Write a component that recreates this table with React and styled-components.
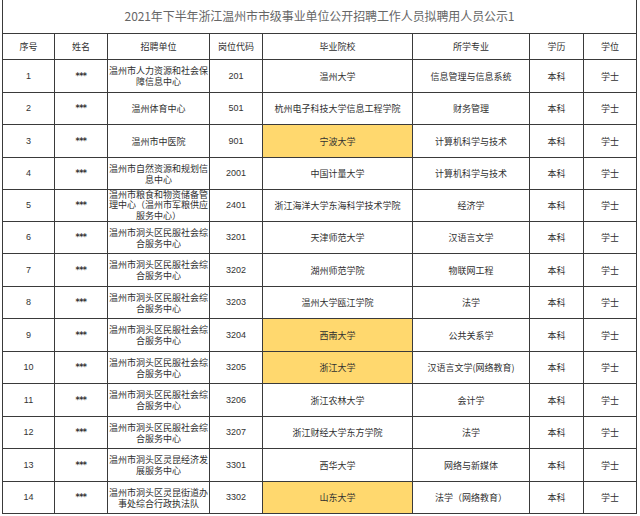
import React from "react";
import styled, { createGlobalStyle } from "styled-components";

const Global = createGlobalStyle`
  html, body { margin: 0; padding: 0; background: #fff; }
  body { font-family: "Noto Sans CJK SC", "Noto Sans", sans-serif; }
`;

const Sheet = styled.div`
  margin-left: 2px;
  width: 635px;
  display: grid;
  grid-template-columns: 52px 53px 102px 53px 150px 117px 54px 53px;
  border-left: 1px solid #3a3a3a;
  box-sizing: border-box;
`;

const Title = styled.div`
  grid-column: 1 / -1;
  height: 34px;
  box-sizing: border-box;
  border-right: 1px solid #3a3a3a;
  border-bottom: 1px solid #3a3a3a;
  display: flex;
  align-items: center;
  justify-content: center;
  padding-bottom: 3px;
  font-size: 12px;
  color: #666;
  letter-spacing: -0.1px;
`;

const Cell = styled.div`
  box-sizing: border-box;
  height: ${(p) => p.$h}px;
  border-right: 1px solid #3a3a3a;
  border-bottom: 1px solid #3a3a3a;
  background: ${(p) => (p.$hl ? "#ffd86e" : "#fff")};
  display: flex;
  flex-direction: column;
  align-items: center;
  justify-content: center;
  text-align: center;
  font-size: 9px;
  line-height: ${(p) => (p.$tight ? "10.3px" : "11px")};
  color: #303030;
  white-space: nowrap;
  overflow: visible;
`;

const Stars = styled.span`
  font-family: "DejaVu Sans", sans-serif;
  font-weight: bold;
  font-size: 8px;
  letter-spacing: -0.5px;
  color: #333;
`;

const Num = styled.span`
  font-family: "Liberation Sans", Arial, sans-serif;
  font-size: 9px;
  color: #333;
`;

const headers = ["序号", "姓名", "招聘单位", "岗位代码", "毕业院校", "所学专业", "学历", "学位"];

const rows = [
  { unit: ["温州市人力资源和社会保", "障信息中心"], code: "201", school: "温州大学", major: "信息管理与信息系统" },
  { unit: ["温州体育中心"], code: "501", school: "杭州电子科技大学信息工程学院", major: "财务管理" },
  { unit: ["温州市中医院"], code: "901", school: "宁波大学", major: "计算机科学与技术", hl: true },
  { unit: ["温州市自然资源和规划信", "息中心"], code: "2001", school: "中国计量大学", major: "计算机科学与技术" },
  { unit: ["温州市粮食和物资储备管", "理中心（温州市军粮供应", "服务中心）"], code: "2401", school: "浙江海洋大学东海科学技术学院", major: "经济学" },
  { unit: ["温州市洞头区民服社会综", "合服务中心"], code: "3201", school: "天津师范大学", major: "汉语言文学" },
  { unit: ["温州市洞头区民服社会综", "合服务中心"], code: "3202", school: "湖州师范学院", major: "物联网工程" },
  { unit: ["温州市洞头区民服社会综", "合服务中心"], code: "3203", school: "温州大学瓯江学院", major: "法学" },
  { unit: ["温州市洞头区民服社会综", "合服务中心"], code: "3204", school: "西南大学", major: "公共关系学", hl: true },
  { unit: ["温州市洞头区民服社会综", "合服务中心"], code: "3205", school: "浙江大学", major: "汉语言文学(网络教育)", hl: true },
  { unit: ["温州市洞头区民服社会综", "合服务中心"], code: "3206", school: "浙江农林大学", major: "会计学" },
  { unit: ["温州市洞头区民服社会综", "合服务中心"], code: "3207", school: "浙江财经大学东方学院", major: "法学" },
  { unit: ["温州市洞头区灵昆经济发", "展服务中心"], code: "3301", school: "西华大学", major: "网络与新媒体" },
  { unit: ["温州市洞头区灵昆街道办", "事处综合行政执法队"], code: "3302", school: "山东大学", major: "法学（网络教育）", hl: true },
];

const heights = [33, 32, 33, 32, 32, 32, 33, 32, 33, 32, 33, 32, 33, 32];

export default function App() {
  return (
    <>
      <Global />
      <Sheet>
        <Title>2021年下半年浙江温州市市级事业单位公开招聘工作人员拟聘用人员公示1</Title>
        {headers.map((h) => (
          <Cell key={h} $h={26}>{h}</Cell>
        ))}
        {rows.map((r, i) => {
          const h = heights[i];
          return (
            <React.Fragment key={i}>
              <Cell $h={h}><Num>{i + 1}</Num></Cell>
              <Cell $h={h}><Stars>***</Stars></Cell>
              <Cell $h={h} $tight={r.unit.length > 2}>
                {r.unit.map((l, j) => (
                  <span key={j}>{l}</span>
                ))}
              </Cell>
              <Cell $h={h}><Num>{r.code}</Num></Cell>
              <Cell $h={h} $hl={r.hl}>{r.school}</Cell>
              <Cell $h={h}>{r.major}</Cell>
              <Cell $h={h}>本科</Cell>
              <Cell $h={h}>学士</Cell>
            </React.Fragment>
          );
        })}
      </Sheet>
    </>
  );
}
